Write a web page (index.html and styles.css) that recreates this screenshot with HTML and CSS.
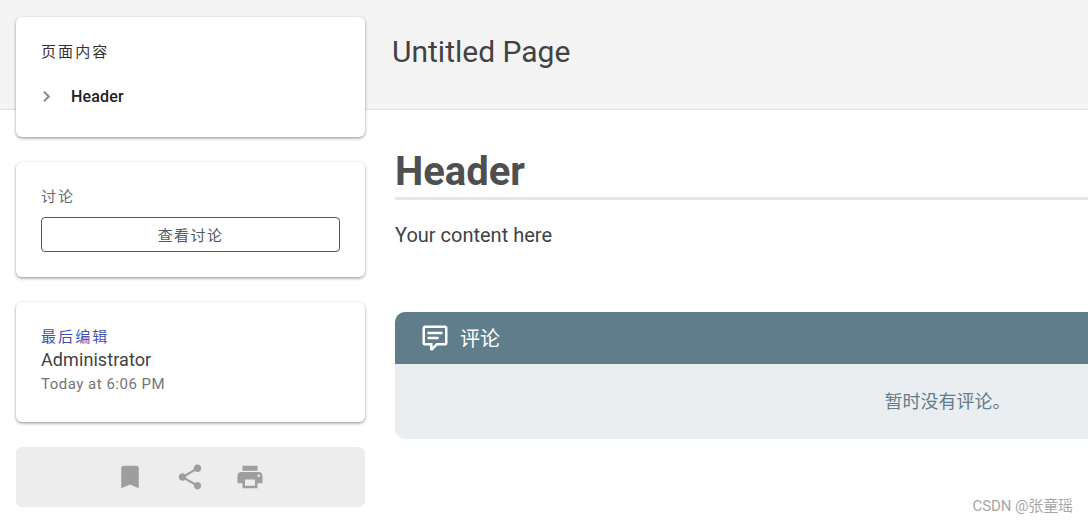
FILE: index.html
```html
<!DOCTYPE html>
<html lang="zh-CN">
<head>
    <meta charset="UTF-8">
    <title>Untitled Page</title>
    <link rel="stylesheet" href="styles.css">
</head>
<body>
    <div class="page">
        <aside class="sidebar">
            <section class="card card-toc">
                <div class="card-label toc-label">页面内容</div>
                <div class="toc-item">
                    <svg class="toc-arrow" viewBox="0 0 24 24"><path d="M8.59 16.59L13.17 12 8.59 7.41 10 6l6 6-6 6z"/></svg>
                    <span>Header</span>
                </div>
            </section>

            <section class="card card-discuss">
                <div class="card-label discuss-label">讨论</div>
                <button class="discuss-btn">查看讨论</button>
            </section>

            <section class="card card-edit">
                <div class="card-label edit-label">最后编辑</div>
                <div class="edit-name">Administrator</div>
                <div class="edit-date">Today at 6:06 PM</div>
            </section>

            <div class="actions">
                <svg class="action-icon" viewBox="0 0 24 24"><path d="M17 3H7c-1.1 0-1.99.9-1.99 2L5 21l7-3 7 3V5c0-1.1-.9-2-2-2z"/></svg>
                <svg class="action-icon" viewBox="0 0 24 24"><path d="M18 16.08c-.76 0-1.44.3-1.96.77L8.91 12.7c.05-.23.09-.46.09-.7s-.04-.47-.09-.7l7.05-4.11c.54.5 1.25.81 2.04.81 1.66 0 3-1.34 3-3s-1.34-3-3-3-3 1.34-3 3c0 .24.04.47.09.7L8.04 9.81C7.5 9.31 6.79 9 6 9c-1.66 0-3 1.34-3 3s1.34 3 3 3c.79 0 1.5-.31 2.04-.81l7.12 4.16c-.05.21-.08.43-.08.65 0 1.61 1.31 2.92 2.92 2.92 1.61 0 2.92-1.31 2.92-2.92s-1.31-2.92-2.92-2.92z"/></svg>
                <svg class="action-icon" viewBox="0 0 24 24"><path d="M19 8H5c-1.66 0-3 1.34-3 3v6h4v4h12v-4h4v-6c0-1.66-1.34-3-3-3zm-3 11H8v-5h8v5zm3-7c-.55 0-1-.45-1-1s.45-1 1-1 1 .45 1 1-.45 1-1 1zm-1-9H6v4h12V3z"/></svg>
            </div>
        </aside>

        <main class="main">
            <div class="page-title">Untitled Page</div>
            <div class="content">
                <h1 class="content-heading">Header</h1>
                <p class="content-text">Your content here</p>
                <section class="comments">
                    <div class="comments-head">
                        <svg class="comments-icon" viewBox="0 0 24 24"><path d="M9,22A1,1 0 0,1 8,21V18H4A2,2 0 0,1 2,16V4C2,2.89 2.9,2 4,2H20A2,2 0 0,1 22,4V16A2,2 0 0,1 20,18H13.9L10.2,21.71C10,21.9 9.75,22 9.5,22V22H9M10,16V19.08L13.08,16H20V4H4V16H10M6,7H18V9H6V7M6,11H15V13H6V11Z"/></svg>
                        <span class="comments-title">评论</span>
                    </div>
                    <div class="comments-body">暂时没有评论。</div>
                </section>
            </div>
        </main>
    </div>

    <div class="watermark">CSDN @张童瑶</div>
</body>
</html>
```

FILE: styles.css
```css
* {
    margin: 0;
    padding: 0;
    box-sizing: border-box;
}

html, body {
    height: 100%;
    overflow: hidden;
}

body {
    font-family: Roboto, "Noto Sans CJK SC", sans-serif;
    color: #424242;
    background: #fff;
}

.page {
    display: flex;
    width: 1500px;
    height: 522px;
    background: linear-gradient(#f4f4f4 109px, #e0e0e0 109px, #e0e0e0 110px, transparent 110px);
}

/* sidebar */
.sidebar {
    flex: none;
    width: 349px;
    margin: 17px 0 0 16px;
}

.card {
    background: #fff;
    border-radius: 6px;
    box-shadow: 0 2px 4px -1px rgba(0, 0, 0, 0.2), 0 1px 3px rgba(0, 0, 0, 0.3);
    padding: 0 25px;
    margin-bottom: 25px;
}

.card-label {
    font-size: 15px;
    letter-spacing: 2.1px;
    line-height: 20px;
}

.card-toc {
    height: 120px;
    padding-top: 25px;
}

.toc-label {
    color: #333;
}

.toc-item {
    display: flex;
    align-items: center;
    margin-top: 19px;
    height: 30px;
    font-size: 16px;
    font-weight: 500;
    letter-spacing: 0.15px;
    color: #212121;
}

.toc-arrow {
    width: 21px;
    height: 21px;
    margin: 0 14.5px 0 -5.5px;
    fill: #8a8a8a;
    stroke: #8a8a8a;
    stroke-width: 0.6;
}

.card-discuss {
    height: 115px;
    padding-top: 25px;
}

.discuss-label {
    color: #5f6b73;
}

.discuss-btn {
    display: block;
    width: 299px;
    height: 35px;
    margin-top: 10px;
    background: #fff;
    border: 1px solid #4f5b62;
    border-radius: 4px;
    font-family: inherit;
    font-size: 15px;
    letter-spacing: 1.4px;
    color: #4f5b62;
}

.card-edit {
    height: 120px;
    padding-top: 25px;
}

.edit-label {
    color: #3f51b5;
}

.edit-name {
    font-size: 18px;
    letter-spacing: 0.08px;
    line-height: 26px;
    color: #424242;
}

.edit-date {
    font-size: 15px;
    letter-spacing: 0.5px;
    line-height: 22px;
    color: #757575;
}

.actions {
    display: flex;
    justify-content: center;
    align-items: center;
    gap: 30px;
    height: 60px;
    padding-right: 1px;
    background: #ededed;
    border-radius: 6px;
}

.action-icon {
    width: 30px;
    height: 30px;
    fill: #9e9e9e;
}

/* main column */
.main {
    flex: 1;
    min-width: 0;
}

.page-title {
    height: 110px;
    padding: 32px 0 0 27px;
    font-size: 30px;
    line-height: 40px;
    color: #424242;
}

.content {
    padding: 0 0 0 30px;
}

.content-heading {
    margin-top: 37px;
    border-bottom: 3px solid #e6e6e6;
    font-size: 40px;
    font-weight: 700;
    line-height: 50px;
    color: #4f4f4f;
}

.content-text {
    margin-top: 20px;
    font-size: 20px;
    line-height: 30px;
    color: #424242;
}

.comments {
    margin-top: 62px;
    border-radius: 10px;
    overflow: hidden;
    background: #eaeef1;
}

.comments-head {
    display: flex;
    align-items: center;
    height: 52px;
    padding-left: 25px;
    background: #607d8b;
    color: #fff;
    font-size: 20px;
}

.comments-icon {
    width: 30px;
    height: 30px;
    margin-right: 10px;
    fill: #fff;
}

.comments-title {
    margin-bottom: 2px;
}

.comments-body {
    height: 75px;
    padding-top: 25px;
    text-align: center;
    font-size: 18px;
    line-height: 25px;
    color: #607d8b;
}

.watermark {
    position: absolute;
    right: 15px;
    bottom: 7px;
    font-size: 15px;
    letter-spacing: -0.1px;
    line-height: 18px;
    color: #a6a6a6;
}
```
